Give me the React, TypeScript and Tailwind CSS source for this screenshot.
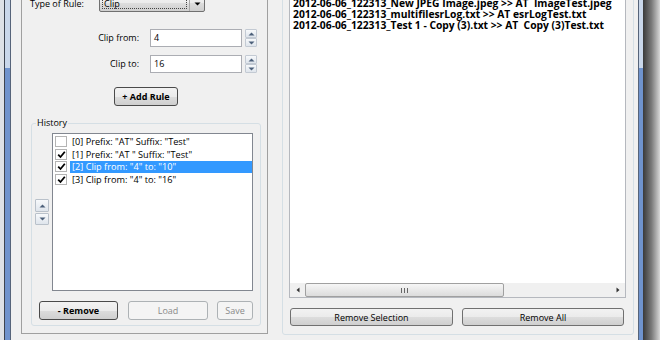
import type { FC } from "react";

const FONT = "font-['Open_Sans','Liberation_Sans',sans-serif]";

const TriUp: FC<{ color?: string }> = ({ color = "#4c607a" }) => (
  <svg width="7" height="4" viewBox="0 0 7 4">
    <path d="M0.5 3.5 L3.5 0.5 L6.5 3.5 Z" fill={color} />
  </svg>
);

const TriDown: FC<{ color?: string }> = ({ color = "#4c607a" }) => (
  <svg width="7" height="4" viewBox="0 0 7 4">
    <path d="M0.5 0.5 L3.5 3.5 L6.5 0.5 Z" fill={color} />
  </svg>
);

interface WinButtonProps {
  label: string;
  width: string;
  height?: string;
  bold?: boolean;
  primary?: boolean;
  disabled?: boolean;
}

const WinButton: FC<WinButtonProps> = ({ label, width, height = "h-[19px]", bold, primary, disabled }) => {
  const look = disabled
    ? "border-[#adb2b5] bg-[#f4f4f4] text-[#8a8a8a]"
    : primary
      ? "border-[#4a4a4a] bg-[linear-gradient(#f2f2f2,#ebebeb_50%,#dddddd_50%,#cfcfcf)] text-black"
      : "border-[#707070] bg-[linear-gradient(#f2f2f2,#ebebeb_50%,#dddddd_50%,#cfcfcf)] text-black";
  return (
    <div
      className={`${width} ${height} ${look} ${bold ? "font-bold" : ""} flex shrink-0 items-center justify-center rounded-[3px] border text-[9px] leading-none`}
    >
      {label}
    </div>
  );
};

const Spin: FC = () => (
  <div className="ml-[3px] flex flex-col">
    <div className="flex h-[9px] w-[12px] items-center justify-center rounded-[1px] border border-[#c3cad3] bg-linear-to-b from-[#f7f9fb] to-[#dfe5ec]">
      <TriUp />
    </div>
    <div className="flex h-[9px] w-[12px] items-center justify-center rounded-[1px] border border-[#c3cad3] bg-linear-to-b from-[#f7f9fb] to-[#dfe5ec]">
      <TriDown />
    </div>
  </div>
);

const NumberRow: FC<{ label: string; value: string; className: string }> = ({ label, value, className }) => (
  <div className={`flex h-[18px] items-center ${className}`}>
    <div className="w-[117px] text-right text-[9px]">{label}</div>
    <div className="ml-[11px] flex h-[18px] w-[92px] items-center border border-[#abadb3] bg-white pl-[3px] text-[9px]">
      {value}
    </div>
    <Spin />
  </div>
);

const Check: FC<{ checked: boolean }> = ({ checked }) => (
  <div className="flex h-[11px] w-[12px] shrink-0 items-center justify-center border border-[#b4b4b4] bg-white">
    {checked && (
      <svg width="9" height="9" viewBox="0 0 9 9">
        <path d="M1.2 4.6 L3.5 7 L7.8 1.8" stroke="#000" strokeWidth="1.8" fill="none" />
      </svg>
    )}
  </div>
);

const history = [
  { text: '[0] Prefix: "AT" Suffix: "Test"', checked: false },
  { text: '[1] Prefix: "AT " Suffix: "Test"', checked: true },
  { text: '[2] Clip from: "4" to: "10"', checked: true, selected: true },
  { text: '[3] Clip from: "4" to: "16"', checked: true },
];

const files = [
  "2012-06-06_122313_New JPEG Image.jpeg >> AT  ImageTest.jpeg",
  "2012-06-06_122313_multifilesrLog.txt >> AT esrLogTest.txt",
  "2012-06-06_122313_Test 1 - Copy (3).txt >> AT  Copy (3)Test.txt",
];

export default function App() {
  return (
    <div className={`${FONT} flex h-[340px] w-[660px] overflow-hidden bg-white text-black`}>
      {/* left window frame */}
      <div className="flex h-full w-[11px] shrink-0">
        <div className="w-[4px] bg-[#dde1e6]" />
        <div className="w-[1px] bg-[#3d4450]" />
        <div className="flex h-full w-[5px] flex-col">
          <div className="h-[68px] bg-[#c9d7ea]" />
          <div className="flex-1 bg-[#6f93cd]" />
        </div>
        <div className="w-[1px] bg-[#56647a]" />
      </div>

      {/* window client area */}
      <div className="h-full w-[627px] shrink-0 overflow-hidden bg-[#f0f0f0]">
        <div className="-mt-[20px] flex items-start pl-[10px]">
          {/* left panel */}
          <div className="flex h-[354px] w-[247px] shrink-0 flex-col border border-[#a0a0a0]">
            <div className="mt-[14px] flex h-[17px] items-center">
              <div className="ml-[8px] w-[69px] text-[9px]">Type of Rule:</div>
              <div className="flex h-[17px] w-[106px] items-stretch rounded-[2px] border border-[#707070] bg-[linear-gradient(#f2f2f2,#ebebeb_50%,#dddddd_50%,#cfcfcf)]">
                <div className="m-[2px] flex flex-1 items-center border border-dotted border-[#444] pl-[1px] text-[9px] leading-none">
                  Clip
                </div>
                <div className="flex w-[15px] items-center justify-center border-l border-[#a8a8a8]">
                  <TriDown color="#000" />
                </div>
              </div>
            </div>

            <NumberRow label="Clip from:" value="4" className="mt-[17px]" />
            <NumberRow label="Clip to:" value="16" className="mt-[8px]" />

            <div className="ml-[92px] mt-[14px]">
              <WinButton label="+ Add Rule" width="w-[64px]" bold primary />
            </div>

            {/* History group */}
            <div className="relative ml-[9px] mt-[17px] flex h-[203px] w-[230px] flex-col rounded-[3px] border border-[#d5dfe5] pt-[9px]">
              <span className="absolute -top-[8px] left-[4px] bg-[#f0f0f0] px-[1px] text-[9px] leading-[14px]">History</span>
              <div className="flex items-center">
                <div className="ml-[3px] flex w-[14px] flex-col gap-[1px]">
                  <div className="flex h-[13px] w-[14px] items-center justify-center rounded-[1px] border border-[#b9c1ca] bg-linear-to-b from-[#f7f9fb] to-[#dfe5ec]">
                    <TriUp />
                  </div>
                  <div className="flex h-[12px] w-[14px] items-center justify-center rounded-[1px] border border-[#b9c1ca] bg-linear-to-b from-[#f7f9fb] to-[#dfe5ec]">
                    <TriDown />
                  </div>
                </div>
                <div className="ml-[3px] h-[158px] w-[201px] border border-[#828790] bg-white pt-[1.5px]">
                  {history.map((h) => (
                    <div key={h.text} className="flex h-[12.5px] items-center">
                      <div className="ml-[2px] mr-[3px]">
                        <Check checked={h.checked} />
                      </div>
                      <div
                        className={`flex h-full flex-1 items-center whitespace-pre pl-[2px] text-[9.2px] leading-none ${
                          h.selected ? "bg-[#3399ff] text-white" : ""
                        }`}
                      >
                        {h.text}
                      </div>
                    </div>
                  ))}
                </div>
              </div>
              <div className="ml-[7px] mt-[10px] flex">
                <WinButton label="- Remove" width="w-[79px]" bold primary />
                <div className="ml-[10px]">
                  <WinButton label="Load" width="w-[80px]" disabled />
                </div>
                <div className="ml-[9px]">
                  <WinButton label="Save" width="w-[36px]" disabled />
                </div>
              </div>
            </div>
          </div>

          {/* right panel */}
          <div className="ml-[14px] flex h-[355px] w-[352px] shrink-0 flex-col rounded-[3px] border border-[#d5dfe5] px-[6px] pt-[6px]">
            <div className="flex h-[311px] w-[337px] flex-col border border-[#b5b8be] bg-white">
              <div className="flex-1 whitespace-pre pl-[3px] pt-[10px] text-[10.3px] font-bold leading-[11px]">
                {files.map((f) => (
                  <div key={f}>{f}</div>
                ))}
              </div>
              <div className="flex h-[14px] items-stretch bg-[#f0f0f0]">
                <div className="flex w-[15px] items-center justify-center">
                  <svg width="4" height="6" viewBox="0 0 4 6">
                    <path d="M3.5 0.5 L0.5 3 L3.5 5.5 Z" fill="#333" />
                  </svg>
                </div>
                <div className="flex w-[199px] items-center justify-center rounded-[2px] border border-[#a0a0a0] bg-linear-to-b from-[#f6f6f6] to-[#dcdcdc]">
                  <div className="flex gap-[2px]">
                    <div className="h-[5px] w-[1px] bg-[#666]" />
                    <div className="h-[5px] w-[1px] bg-[#666]" />
                    <div className="h-[5px] w-[1px] bg-[#666]" />
                  </div>
                </div>
                <div className="flex-1" />
                <div className="flex w-[15px] items-center justify-center">
                  <svg width="4" height="6" viewBox="0 0 4 6">
                    <path d="M0.5 0.5 L3.5 3 L0.5 5.5 Z" fill="#333" />
                  </svg>
                </div>
              </div>
            </div>
            <div className="ml-[1px] mt-[10px] flex gap-[9px]">
              <WinButton label="Remove Selection" width="w-[163px]" height="h-[18px]" />
              <WinButton label="Remove All" width="w-[162px]" height="h-[18px]" />
            </div>
          </div>
        </div>
      </div>

      {/* right window frame and shadow */}
      <div className="flex h-full w-[22px] shrink-0">
        <div className="w-[1px] bg-[#56647a]" />
        <div className="flex h-full w-[4px] flex-col">
          <div className="h-[68px] bg-[#c9d7ea]" />
          <div className="flex-1 bg-[#6f93cd]" />
        </div>
        <div className="flex-1 bg-linear-to-r from-[#3a3a3a] via-[#7a7a7a] to-[#d8d8d8]" />
      </div>
    </div>
  );
}
